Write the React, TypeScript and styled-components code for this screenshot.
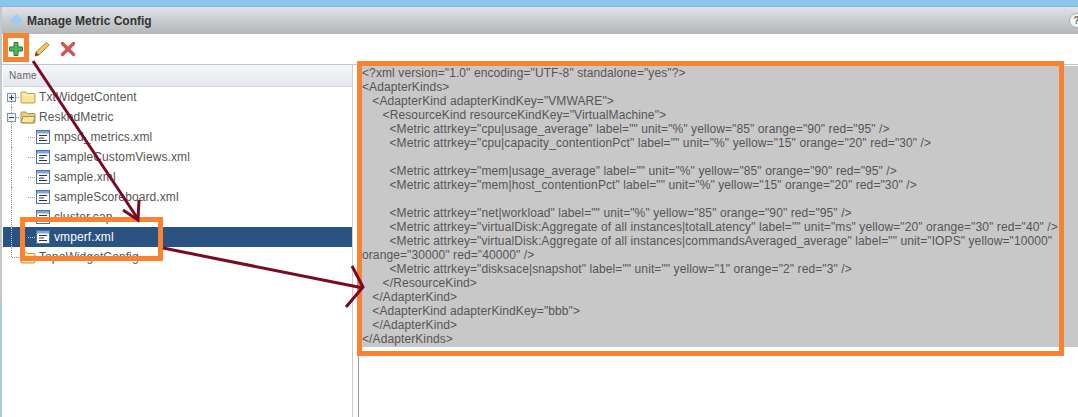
import React from "react";
import styled, { createGlobalStyle } from "styled-components";

const Global = createGlobalStyle`
  html, body { margin: 0; padding: 0; background: #fff; }
  body { font-family: "Liberation Sans", Arial, sans-serif; }
`;

const Page = styled.div`
  position: relative;
  width: 1078px;
  height: 417px;
  overflow: hidden;
  display: flex;
  flex-direction: column;
  background: #fff;
`;
const Sky = styled.div`
  height: 6px;
  background: #8cc5ea;
  border-bottom: 1px solid #8fb0d0;
`;
const Win = styled.div`
  flex: 1;
  min-height: 0;
  display: flex;
  flex-direction: column;
  border-left: 2px solid #b4ccdc;
  border-image: linear-gradient(#c4c8cc 72%, #a9c8dc 72%) 1;
`;
const TitleBar = styled.div`
  height: 27px;
  display: flex;
  align-items: center;
  gap: 2px;
  padding-left: 6px;
  background: linear-gradient(#e2e2e8, #b4b6b7);
  color: #333;
  font-size: 12px;
  font-weight: bold;
  position: relative;
`;
const Help = styled.div`
  position: absolute;
  left: 1067px;
  top: 6px;
  width: 13px;
  height: 13px;
  border-radius: 50%;
  background: #f4f4f4;
  border: 1px solid #aaa;
  color: #666;
  font-size: 10px;
  line-height: 13px;
  text-align: center;
`;
const Toolbar = styled.div`
  height: 30px;
  display: flex;
  align-items: center;
  gap: 10px;
  padding-left: 6px;
  background: #fff;
`;
const Main = styled.div`
  flex: 1;
  min-height: 0;
  display: flex;
  border-top: 1px solid #c4c4c4;
`;
const TreePane = styled.div`
  width: 349px;
  margin-left: 1px;
  border-right: 1px solid #ccc;
  display: flex;
  flex-direction: column;
  position: relative;
`;
const TreeHead = styled.div`
  height: 22px;
  box-sizing: border-box;
  padding-left: 6px;
  display: flex;
  align-items: center;
  background: linear-gradient(#f5f7fa, #e4e8ee);
  border-bottom: 1px solid #d8d8d8;
  color: #666;
  font-size: 10px;
  letter-spacing: 0.3px;
`;
const Row = styled.div<{ $selected?: boolean; $depth: number; $first?: boolean; $last?: boolean }>`
  position: relative;
  height: 20px;
  display: flex;
  align-items: center;
  gap: ${(p) => (p.$depth === 0 ? 3 : 4)}px;
  padding-left: ${(p) => (p.$depth === 0 ? 17 : 33)}px;
  background: ${(p) => (p.$selected ? "#2a5382" : "transparent")};
  color: ${(p) => (p.$selected ? "#fff" : "#555")};
  font-size: 12px;
  letter-spacing: 0.1px;
  &::before {
    content: "";
    position: absolute;
    left: 8px;
    top: ${(p) => (p.$first ? 10 : 0)}px;
    bottom: ${(p) => (p.$last ? 10 : 0)}px;
    border-left: 1px dotted ${(p) => (p.$selected ? "#c8d4e2" : "#9a9a9a")};
  }
  &::after {
    content: "";
    position: absolute;
    left: ${(p) => (p.$depth === 0 ? 9 : 25)}px;
    top: 10px;
    width: 7px;
    border-top: 1px dotted ${(p) => (p.$selected ? "#c8d4e2" : "#9a9a9a")};
  }
`;
const Splitter = styled.div`
  width: 5px;
  background: #fff;
`;
const Editor = styled.div`
  flex: 1;
  min-width: 0;
  border-left: 1px solid #999;
  padding: 1px 0 0 3px;
`;
const Xml = styled.pre`
  margin: 0;
  padding-bottom: 1px;
  font: 12px/14px "Liberation Sans", Arial, sans-serif;
  letter-spacing: 0.1px;
  color: #555;
  background: #c8c8c8;
  white-space: pre-wrap;
`;
const Callout = styled.div<{ $x: number; $y: number; $w: number; $h: number }>`
  position: absolute;
  left: ${(p) => p.$x}px;
  top: ${(p) => p.$y}px;
  width: ${(p) => p.$w}px;
  height: ${(p) => p.$h}px;
  box-sizing: border-box;
  border: 5px solid #fb8230;
`;
const Arrows = styled.svg`
  position: absolute;
  left: 0;
  top: 0;
  pointer-events: none;
`;

const Diamond = () => (
  <svg width="17" height="17" viewBox="0 0 17 17">
    <path d="M8.500 2 15 8.500 8.500 15 2 8.500Z" fill="#9fcbf6" />
  </svg>
);
const Plus = () => (
  <svg width="16" height="16" viewBox="0 0 16 16">
    <path d="M6 1.500h4v4.500h4.500v4H10v4.500H6V10H1.500V6H6Z" fill="#52b35a" stroke="#2c7d3a" />
  </svg>
);
const Pencil = () => (
  <svg width="16" height="16" viewBox="0 0 16 16">
    <path d="M12.500 1.500 15 4 5 14l-4 1 1-4Z" fill="#f0c860" stroke="#a88a3a" />
    <path d="M1 15l1-4 3 3Z" fill="#5a4a30" />
  </svg>
);
const Cross = () => (
  <svg width="16" height="16" viewBox="0 0 16 16">
    <path d="M2.500 2.500 13.500 13.500M13.500 2.500 2.500 13.500" stroke="#d2535a" strokeWidth="3.400" strokeLinecap="round" />
  </svg>
);
const Expander = ({ open }: { open?: boolean }) => (
  <svg width="9" height="9" viewBox="0 0 9 9">
    <rect x=".5" y=".5" width="8" height="8" fill="#f2f6fb" stroke="#7f93ad" />
    <path d={open ? "M2 4.500h5" : "M2 4.500h5M4.500 2v5"} stroke="#26405f" />
  </svg>
);
const ExpanderSlot = styled.span`
  position: absolute;
  left: 4px;
  top: 6px;
  z-index: 1;
  display: flex;
  background: #fff;
`;
const Folder = ({ open }: { open?: boolean }) =>
  open ? (
    <svg width="16" height="14" viewBox="0 0 16 14">
      <path d="M1 3q0-1 1-1h4l1.500 1.500H14q1 0 1 1V12q0 1-1 1H2q-1 0-1-1Z" fill="#e9cf7f" stroke="#a8935a" />
      <path d="M1 12.500 3 6.500h12l-2 6.500Z" fill="#f9e59e" stroke="#a8935a" />
    </svg>
  ) : (
    <svg width="16" height="14" viewBox="0 0 16 14">
      <path d="M1 3q0-1 1-1h4l1.500 1.500H14q1 0 1 1V12q0 1-1 1H2q-1 0-1-1Z" fill="#fae596" stroke="#b39a55" />
      <path d="M2 5h12" stroke="#fff6cf" />
    </svg>
  );
const FileIcon = () => (
  <svg width="14" height="14" viewBox="0 0 14 14">
    <rect x=".5" y=".5" width="13" height="13" fill="#fff" stroke="#4a72a8" />
    <rect x="1" y="1" width="12" height="2.500" fill="#7fa6d8" />
    <path d="M3 5.500h8M3 8h5M3 10.500h8" stroke="#333" />
  </svg>
);

const xml = `<?xml version="1.0" encoding="UTF-8" standalone="yes"?>
<AdapterKinds>
   <AdapterKind adapterKindKey="VMWARE">
      <ResourceKind resourceKindKey="VirtualMachine">
        <Metric attrkey="cpu|usage_average" label="" unit="%" yellow="85" orange="90" red="95" />
        <Metric attrkey="cpu|capacity_contentionPct" label="" unit="%" yellow="15" orange="20" red="30" />

        <Metric attrkey="mem|usage_average" label="" unit="%" yellow="85" orange="90" red="95" />
        <Metric attrkey="mem|host_contentionPct" label="" unit="%" yellow="15" orange="20" red="30" />

        <Metric attrkey="net|workload" label="" unit="%" yellow="85" orange="90" red="95" />
        <Metric attrkey="virtualDisk:Aggregate of all instances|totalLatency" label="" unit="ms" yellow="20" orange="30" red="40" />
        <Metric attrkey="virtualDisk:Aggregate of all instances|commandsAveraged_average" label="" unit="IOPS" yellow="10000" orange="30000" red="40000" />
        <Metric attrkey="disksace|snapshot" label="" unit="" yellow="1" orange="2" red="3" />
      </ResourceKind>
   </AdapterKind>
   <AdapterKind adapterKindKey="bbb">
   </AdapterKind>
</AdapterKinds>`;

const rows: { name: string; depth: number; kind: "closed" | "open" | "file"; selected?: boolean }[] = [
  { name: "TxtWidgetContent", depth: 0, kind: "closed" },
  { name: "ReskndMetric", depth: 0, kind: "open" },
  { name: "mpsd_metrics.xml", depth: 1, kind: "file" },
  { name: "sampleCustomViews.xml", depth: 1, kind: "file" },
  { name: "sample.xml", depth: 1, kind: "file" },
  { name: "sampleScoreboard.xml", depth: 1, kind: "file" },
  { name: "cluster.cap", depth: 1, kind: "file" },
  { name: "vmperf.xml", depth: 1, kind: "file", selected: true },
  { name: "TopoWidgetConfig", depth: 0, kind: "closed" },
];

export default function App() {
  return (
    <Page>
      <Global />
      <Sky />
      <Win>
        <TitleBar>
          <Diamond />
          Manage Metric Config
          <Help>?</Help>
        </TitleBar>
        <Toolbar>
          <Plus />
          <Pencil />
          <Cross />
        </Toolbar>
        <Main>
          <TreePane>
            <TreeHead>Name</TreeHead>
            {rows.map((r, i) => (
              <Row
                key={r.name}
                $depth={r.depth}
                $selected={r.selected}
                $first={i === 0}
                $last={i === rows.length - 1}
              >
                {r.depth === 0 && r.name !== "TopoWidgetConfig" && (
                  <ExpanderSlot>
                    <Expander open={r.kind === "open"} />
                  </ExpanderSlot>
                )}
                {r.kind === "file" ? <FileIcon /> : <Folder open={r.kind === "open"} />}
                {r.name}
              </Row>
            ))}
          </TreePane>
          <Splitter />
          <Editor>
            <Xml>{xml}</Xml>
          </Editor>
        </Main>
      </Win>
      <Callout $x={3} $y={33} $w={26} $h={29} />
      <Callout $x={20} $y={217} $w={143} $h={44} />
      <Callout $x={357} $y={61} $w={707} $h={295} />
      <Arrows width="1078" height="417" viewBox="0 0 1078 417">
        <g stroke="#7a0a24" strokeWidth="3" fill="none">
          <path d="M33 61 138 219" />
          <path d="M139 200 138 220 123 210" />
          <path d="M163 248 363 288" />
          <path d="M352 266 363 287 346 307" />
        </g>
      </Arrows>
    </Page>
  );
}
